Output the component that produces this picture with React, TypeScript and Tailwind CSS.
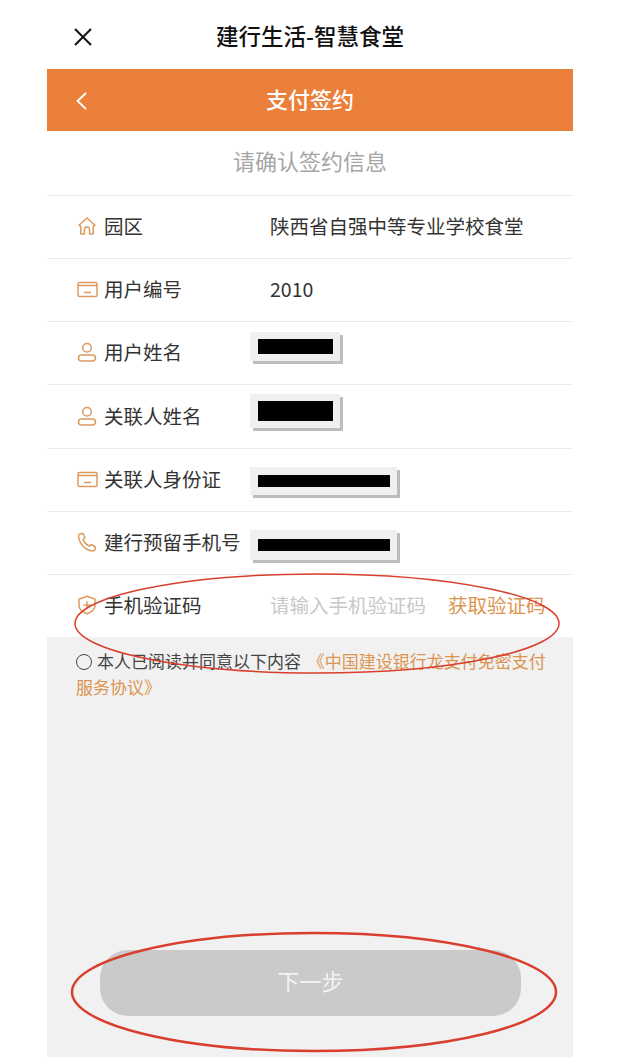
import React from 'react';

const font = { fontFamily: '"Noto Sans CJK SC", "Noto Sans", sans-serif' };

function HomeIcon() {
  return (
    <svg viewBox="0 0 20 20" className="w-[20px] h-[20px]" fill="none" stroke="#dd9a5e" strokeWidth="1.5" strokeLinejoin="round">
      <path d="M2 9.2 10 2l8 7.2-1.8 1.2V18H12.6v-4.4a2.6 2.6 0 0 0-5.2 0V18H3.8v-7.6z" />
    </svg>
  );
}

function CardIcon() {
  return (
    <svg viewBox="0 0 21 17" className="w-[21px] h-[17px]" fill="none" stroke="#dd9a5e" strokeWidth="1.5">
      <rect x="1" y="1.5" width="19" height="14" rx="1.5" />
      <path d="M1 4.5h19M7 11.5h7" />
    </svg>
  );
}

function UserIcon() {
  return (
    <svg viewBox="0 0 20 20" className="w-[20px] h-[20px]" fill="none" stroke="#dd9a5e" strokeWidth="1.5">
      <circle cx="10" cy="5.8" r="4.3" />
      <rect x="1.5" y="13" width="17" height="6" rx="3" />
    </svg>
  );
}

function PhoneIcon() {
  return (
    <svg viewBox="0 0 20 20" className="w-[20px] h-[20px]" fill="none" stroke="#dd9a5e" strokeWidth="1.5" strokeLinejoin="round">
      <path d="M3.2 1.8 6 1.5l2 4.2-1.9 1.6c.9 2.6 3.4 5.6 6.2 6.8l1.9-1.7 4.3 2.6-.5 2.5c-.3 1-1.300 1.500-2.400 1.400C8 18.300 1.900 11 1.600 4.300c0-1.200.6-2.200 1.600-2.500z" />
    </svg>
  );
}

function ShieldIcon() {
  return (
    <svg viewBox="0 0 20 20" className="w-[20px] h-[20px]" fill="none" stroke="#dd9a5e" strokeWidth="1.5" strokeLinejoin="round">
      <path d="M10 1.200 18 4.200v6.300c0 3.600-4 6.700-8 8.300-4-1.600-8-4.700-8-8.300V4.200z" />
      <path d="M10 6.500v7M6.500 10h7" />
    </svg>
  );
}

function Redact({ wide, boxClass, barClass }: { wide?: boolean; boxClass: string; barClass: string }) {
  return (
    <div
      className={`relative ml-[-20px] flex items-center pl-[8px] bg-[#f0f0f0] shadow-[3px_3px_0_#bdbdbd] ${wide ? 'w-[147px]' : 'w-[90px]'} ${boxClass}`}
    >
      <div className={`bg-black ${wide ? 'w-[132px]' : 'w-[75px]'} ${barClass}`} />
    </div>
  );
}

function Row({ icon, label, tall, children }: { icon: React.ReactNode; label: string; tall?: boolean; children?: React.ReactNode }) {
  return (
    <div className={`${tall ? 'h-[64px]' : 'h-[63px]'} shrink-0 flex items-center border-b border-[#ececec] pl-[30px] pb-[2px]`}>
      <div className="w-[193px] flex items-center shrink-0">
        <span className="w-[27px] flex items-center shrink-0">{icon}</span>
        <span className="text-[19.5px] text-[#333333] whitespace-nowrap">{label}</span>
      </div>
      {children}
    </div>
  );
}

export default function App() {
  return (
    <div className="relative w-[617px] h-[1064px] bg-white overflow-hidden" style={font}>
      <div className="ml-[47px] w-[526px] h-[1057px] flex flex-col">
        {/* native title bar */}
        <div className="relative h-[69px] shrink-0 flex items-center justify-center">
          <svg viewBox="0 0 20 20" className="absolute left-[26px] top-[27px] w-[20px] h-[20px]" fill="none" stroke="#111" strokeWidth="2">
            <path d="M2 2l16 16M18 2 2 18" />
          </svg>
          <span className="text-[22.5px] font-medium text-[#111] leading-none pt-[1px]">建行生活-智慧食堂</span>
        </div>

        {/* orange header */}
        <div className="relative h-[62px] shrink-0 bg-[#eb803a] flex items-center justify-center pb-[4px]">
          <svg viewBox="0 0 12 18" className="absolute left-[28px] top-[23px] w-[12px] h-[18px]" fill="none" stroke="#fff" strokeWidth="1.8">
            <path d="M11 1 2.500 9l8.500 8" />
          </svg>
          <span className="text-[22px] font-medium text-white">支付签约</span>
        </div>

        <div className="h-[65px] shrink-0 flex items-center justify-center border-b border-[#ececec] text-[22px] text-[#a6a6a6] pb-[6px]">
          请确认签约信息
        </div>

        <Row icon={<HomeIcon />} label="园区">
          <span className="text-[19.5px] text-[#333333] whitespace-nowrap">陕西省自强中等专业学校食堂</span>
        </Row>
        <Row icon={<CardIcon />} label="用户编号">
          <span className="text-[19.5px] text-[#333333]">2010</span>
        </Row>
        <Row icon={<UserIcon />} label="用户姓名">
          <Redact boxClass="h-[29px] top-[-6px]" barClass="h-[15px]" />
        </Row>
        <Row icon={<UserIcon />} label="关联人姓名" tall>
          <Redact boxClass="h-[34px] top-[-5px]" barClass="h-[20px]" />
        </Row>
        <Row icon={<CardIcon />} label="关联人身份证">
          <Redact wide boxClass="h-[28px] top-[2px]" barClass="h-[12px]" />
        </Row>
        <Row icon={<PhoneIcon />} label="建行预留手机号">
          <Redact wide boxClass="h-[30px] top-[3px]" barClass="h-[12px]" />
        </Row>

        <div className="h-[62px] shrink-0 flex items-center pl-[30px] pb-[2px]">
          <div className="w-[193px] flex items-center shrink-0">
            <span className="w-[27px] flex items-center shrink-0">
              <ShieldIcon />
            </span>
            <span className="text-[19.5px] text-[#333333]">手机验证码</span>
          </div>
          <span className="text-[19.5px] text-[#c8c8c8] whitespace-nowrap">请输入手机验证码</span>
          <span className="ml-[22px] text-[19.5px] text-[#dc9550] whitespace-nowrap">获取验证码</span>
        </div>

        {/* gray area */}
        <div className="flex-1 bg-[#f1f1f1] flex flex-col px-[29px]">
          <p className="mt-[11px] mr-[-5px] text-[17px] leading-[26px] text-[#444444]">
            <span className="inline-block w-[16px] h-[16px] mr-[5px] align-[-2px] rounded-full border-[1.5px] border-[#444444]" />
            本人已阅读并同意以下内容
            <span className="ml-[3px] text-[#dc9550]"> 《中国建设银行龙支付免密支付服务协议》</span>
          </p>
          <div className="mt-auto mb-[41px] ml-[24px] w-[421px] h-[66px] rounded-[28px] bg-[#cacaca] flex items-center justify-center text-[22px] text-[#f4f4f4] pb-[6px]">
            下一步
          </div>
        </div>
      </div>

      {/* red hand-drawn annotations */}
      <svg viewBox="0 0 617 1064" className="absolute inset-0 w-[617px] h-[1064px] pointer-events-none" fill="none" stroke="#d93f2e">
        <ellipse cx="317" cy="623.5" rx="242" ry="49.5" strokeWidth="1.5" />
        <ellipse cx="314" cy="992" rx="242" ry="59" strokeWidth="2.5" />
      </svg>
    </div>
  );
}
